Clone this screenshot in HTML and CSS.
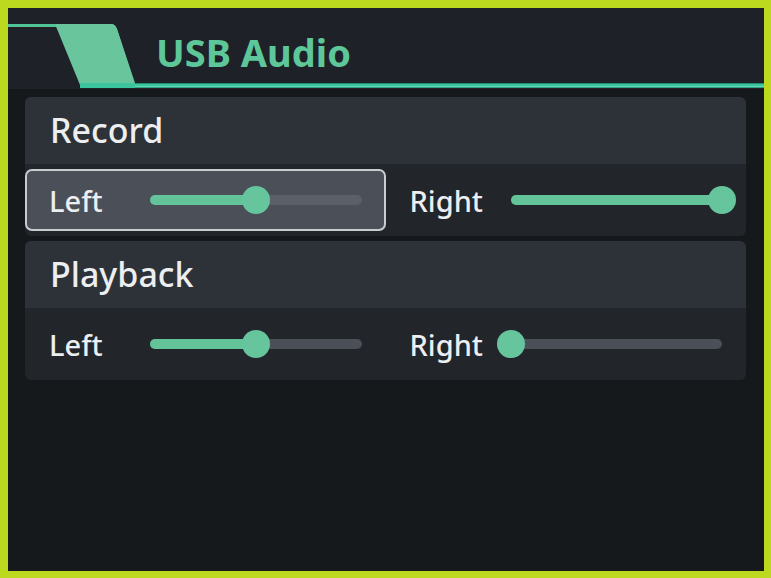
FILE: index.html
```html
<!DOCTYPE html>
<html>
<head>
<meta charset="utf-8">
<link rel="stylesheet" href="styles.css">
</head>
<body>
<div class="frame">
  <div class="screen">
    <header class="topbar">
      <svg class="tab" width="127" height="81" viewBox="0 0 127 81">
        <rect x="0" y="16" width="52" height="3" fill="#4fc497"/>
        <rect x="0" y="19" width="50" height="1" fill="#2a1d23"/>
        <path d="M47 16 L103 16 Q107 16 109 21 L127 75 L127 80 L76 80 Q73 80 72 77 Z" fill="#69c59b"/>
        <rect x="72" y="75" width="55" height="5" fill="#3cc49e"/>
        <path d="M47 16 L103 16 Q107 16 109 21 L125 71 L75 71 Z" fill="#69c59b"/>
      </svg>
      <div class="title">USB Audio</div>
    </header>
    <main class="content">
      <section class="card">
        <div class="card-head">Record</div>
        <div class="card-row">
          <div class="cell focused">
            <span class="label">Left</span>
            <div class="slider"><div class="fill" style="width:50%"></div><div class="knob" style="left:50%"></div></div>
          </div>
          <div class="cell">
            <span class="label">Right</span>
            <div class="slider"><div class="fill" style="width:100%"></div><div class="knob" style="left:100%"></div></div>
          </div>
        </div>
      </section>
      <section class="card">
        <div class="card-head">Playback</div>
        <div class="card-row">
          <div class="cell">
            <span class="label">Left</span>
            <div class="slider"><div class="fill" style="width:50%"></div><div class="knob" style="left:50%"></div></div>
          </div>
          <div class="cell">
            <span class="label">Right</span>
            <div class="slider"><div class="fill" style="width:0%"></div><div class="knob" style="left:0%"></div></div>
          </div>
        </div>
      </section>
    </main>
  </div>
</div>
</body>
</html>
```

FILE: styles.css
```css
* { box-sizing: border-box; }
html, body { margin: 0; padding: 0; }
body {
  background: #bcd91f;
  font-family: "Noto Sans", "DejaVu Sans", sans-serif;
}
.frame {
  width: 771px;
  height: 578px;
  padding: 8px 7px 7px 8px;
  background: #bcd91f;
}
.screen {
  width: 100%;
  height: 100%;
  background: #16191c;
  display: flex;
  flex-direction: column;
}
.topbar {
  height: 81px;
  display: flex;
  background: #1e2128;
  flex: 0 0 auto;
}
.tab { display: block; flex: 0 0 auto; }
.title {
  flex: 1;
  padding: 26px 0 0 21px;
  font-size: 38px;
  line-height: 37px;
  font-weight: 700;
  color: #5ec79a;
  background:
    linear-gradient(#1f8f70 0, #1f8f70 1px, #3cc6a0 1px, #3cc6a0 3px, #66d6b4 3px, #66d6b4 4px, #2aa582 4px, #2aa582 5px, #2a1d23 5px, #2a1d23 6px) left bottom / 100% 6px no-repeat;
}
.content {
  padding: 8px 18px 0 17px;
  display: flex;
  flex-direction: column;
  gap: 5px;
}
.card {
  border-radius: 6px;
  overflow: hidden;
  background: #22262b;
}
.card-head {
  height: 67px;
  line-height: 67px;
  padding-left: 25px;
  font-size: 34px;
  font-weight: 500;
  color: #eceef0;
  background: #2c3238;
}
.card-row {
  height: 72px;
  display: grid;
  grid-template-columns: 1fr 1fr;
}
.cell {
  display: flex;
  align-items: center;
  margin: 5px 0;
  padding: 0 24px 0 24px;
  border-radius: 7px;
}
.cell.focused {
  border: 2px solid #c9cdd2;
  background: #4a4f58;
  padding: 0 22px 0 22px;
}
.label {
  flex: 0 0 101px;
  font-size: 29px;
  font-weight: 500;
  color: #eceef0;
}
.slider {
  position: relative;
  flex: 1;
  height: 10px;
  border-radius: 5px;
  background: #4b5058;
}
.focused .slider { background: #5b6068; }
.fill {
  height: 100%;
  border-radius: 5px;
  background: #63c49a;
}
.knob {
  position: absolute;
  top: 50%;
  width: 28px;
  height: 28px;
  margin: -14px 0 0 -14px;
  border-radius: 50%;
  background: #66c59c;
}
```
